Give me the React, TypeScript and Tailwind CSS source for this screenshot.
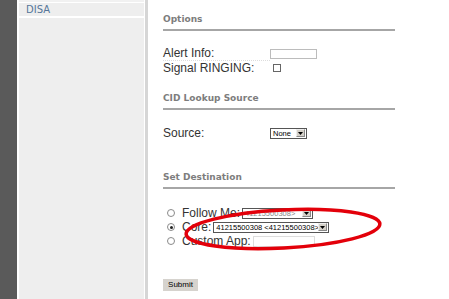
import React from "react";

const label = "font-['Liberation_Sans',Arial,sans-serif] text-[12px] leading-[14px] text-[#333]";
const heading = "font-['DejaVu_Sans',Verdana,sans-serif] text-[9px] font-bold leading-[11px] text-[#7d7d7d]";

function Radio({ checked }: { checked?: boolean }) {
  return (
    <span className="ml-[4px] mr-[7px] flex h-[8px] w-[8px] shrink-0 items-center justify-center rounded-full border border-[#8a8a8a] bg-white">
      {checked && <span className="h-[3px] w-[3px] rounded-full bg-[#222]" />}
    </span>
  );
}

function FakeSelect({ text, width, faded }: { text: string; width: number; faded?: boolean }) {
  return (
    <div
      className="flex h-[11px] items-center border border-[#555] bg-white"
      style={{ width }}
    >
      <span className={`flex-1 overflow-hidden whitespace-nowrap pl-[2px] font-['Liberation_Sans',Arial,sans-serif] text-[7.5px] leading-[9px] ${faded ? "text-[#888]" : "text-black"}`}>
        {text}
      </span>
      <span className="mr-[1px] flex h-[8px] w-[9px] items-center justify-center bg-[#d4d0c8] border border-[#eee] border-r-[#888] border-b-[#888]">
        <svg width="5" height="3" viewBox="0 0 5 3">
          <path d="M0 0h5L2.5 3z" fill="#000" />
        </svg>
      </span>
    </div>
  );
}

function Heading({ text, mt }: { text: string; mt: string }) {
  return (
    <div className={mt}>
      <div className={heading}>{text}</div>
      <div className="mt-[4px] h-[2px] w-[232px] bg-[#a6a6a6]" />
    </div>
  );
}

export default function App() {
  return (
    <div className="relative flex h-[299px] w-[449px] overflow-hidden bg-white">
      {/* dark strip */}
      <div className="w-[17px] shrink-0 bg-[#5a5a5a]" />

      {/* sidebar */}
      <div className="flex w-[131px] shrink-0 border-l-2 border-white">
        <div className="flex-1 bg-[#eeeeee]">
          <div className="h-[3px] border-b border-white bg-[#f1f1f1]" />
          <div className="flex h-[15px] items-center border-b-2 border-white pl-[7px] font-['DejaVu_Sans',Verdana,sans-serif] text-[10px] leading-[12px] text-[#56769a]">
            DISA
          </div>
        </div>
        <div className="w-px bg-white" />
        <div className="w-[3px] bg-[#d6d6d6]" />
      </div>

      {/* content */}
      <div className="flex-1 pl-[15px]">
        <Heading text="Options" mt="mt-[14px]" />

        <div className={`mt-[16px] flex items-center ${label}`}>
          <span className="w-[107px] border-b border-dotted border-[#ddd] leading-[13px]">
            <span>Alert Info:</span>
          </span>
          <span className="h-[10px] w-[47px] border border-[#bcbcbc] bg-white" />
        </div>
        <div className={`flex items-center ${label}`}>
          <span className="w-[110px] leading-[14px]">Signal RINGING:</span>
          <span className="h-[8px] w-[8px] border border-[#666] bg-white" />
        </div>

        <Heading text="CID Lookup Source" mt="mt-[18px]" />

        <div className={`mt-[16px] flex items-center ${label}`}>
          <span className="w-[107px]">Source:</span>
          <FakeSelect text="None" width={37} />
        </div>

        <Heading text="Set Destination" mt="mt-[32px]" />

        <div className={`mt-[17px] flex h-[14px] items-center ${label}`}>
          <Radio />
          <span className="mr-[2px]">Follow Me:</span>
          <FakeSelect text="41215500308>" width={71} faded />
        </div>
        <div className={`flex h-[14px] items-center ${label}`}>
          <Radio checked />
          <span className="mr-[2px]">Core:</span>
          <FakeSelect text="41215500308 <41215500308>" width={116} />
        </div>
        <div className={`flex h-[14px] items-center ${label}`}>
          <Radio />
          <span className="mr-[2px]">Custom App:</span>
          <span className="h-[11px] w-[62px] border border-[#ddd] bg-white" />
        </div>

        <button className="mt-[31px] flex h-[12px] w-[35px] items-center justify-center bg-[#d6d3ce] font-['Liberation_Sans',Arial,sans-serif] text-[8px] leading-[10px] text-black">
          Submit
        </button>
      </div>

      {/* red annotation ellipse */}
      <svg className="pointer-events-none absolute left-0 top-0" width="449" height="299" viewBox="0 0 449 299">
        <ellipse
          cx="283"
          cy="229"
          rx="97"
          ry="19"
          transform="rotate(-3 283 229)"
          fill="none"
          stroke="#e3000a"
          strokeWidth="3.5"
        />
      </svg>
    </div>
  );
}
